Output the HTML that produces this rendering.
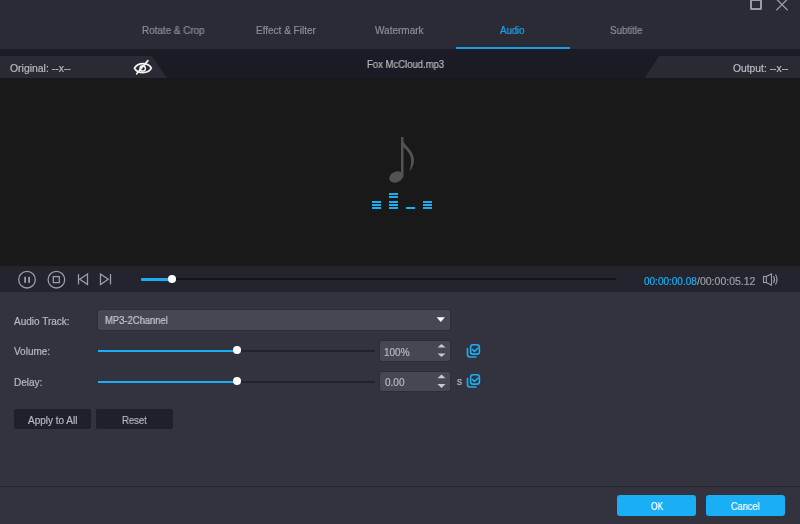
<!DOCTYPE html>
<html><head><meta charset="utf-8">
<style>
*{margin:0;padding:0;box-sizing:border-box}
html,body{width:800px;height:524px;overflow:hidden;background:#33333f;font-family:"Liberation Sans",sans-serif;font-size:10px}
.a{position:absolute}
.t{position:absolute;white-space:nowrap;line-height:1;transform-origin:0 0;-webkit-text-stroke:0.2px currentColor;will-change:transform}
#hdr{left:0;top:0;width:800px;height:49px;background:#2b2b35}
#info{left:0;top:49px;width:800px;height:29px;background:#1b1b25}
#prev{left:0;top:78px;width:800px;height:188px;background:#191919}
#ctrl{left:0;top:266px;width:800px;height:26px;background:#24242e}
#sett{left:0;top:292px;width:800px;height:232px;background:#33333f}
.tab{color:#8d8d96;font-size:10px}
.lbl{color:#b8b8c0}
.box{background:#474753;border-radius:2px;box-shadow:0 0 0 1px rgba(0,0,0,.1)}
.btn{background:#20202a;border-radius:2px}
.bb{background:#1aaff5;border-radius:3px}
</style></head><body>
<div class="a" id="hdr"></div>
<div class="a" id="info"></div>
<div class="a" id="prev"></div>
<div class="a" id="ctrl"></div>
<div class="a" id="sett"></div>

<!-- window buttons -->
<div class="a" style="left:750.4px;top:-1.2px;width:11.2px;height:10.7px;border:2px solid #9c9ca4;border-radius:1.5px"></div>
<svg class="a" style="left:774px;top:0" width="16" height="12"><path d="M2.7 -0.7 L13.3 9.9 M13.3 -0.7 L2.7 9.9" stroke="#a0a0a8" stroke-width="1.3" stroke-linecap="round"/></svg>

<!-- tabs -->
<div class="t tab" style="left:142px;top:26px;transform:scaleX(.988)">Rotate &amp; Crop</div>
<div class="t tab" style="left:256px;top:26px">Effect &amp; Filter</div>
<div class="t tab" style="left:374.8px;top:26px">Watermark</div>
<div class="t tab" style="left:500.2px;top:26px;color:#1aa8ee;transform:scaleX(.96)">Audio</div>
<div class="t tab" style="left:609.8px;top:26px;transform:scaleX(.976)">Subtitle</div>
<div class="a" style="left:456px;top:47px;width:114px;height:2px;background:#13a2e6"></div>

<!-- info bar -->
<svg class="a" style="left:0;top:56px" width="800" height="22">
<path d="M0 0 H152 L167 22 H0 Z" fill="#2a2a35"/>
<path d="M659 0 H800 V22 H644.7 Z" fill="#2a2a35"/>
</svg>
<div class="t lbl" style="left:9.5px;top:64px;transform:scaleX(1.043)">Original: --x--</div>
<div class="t lbl" style="left:733.2px;top:64px;transform:scaleX(1.03)">Output: --x--</div>
<div class="t lbl" style="left:367.2px;top:60px;transform:scaleX(.951)">Fox McCloud.mp3</div>
<svg class="a" style="left:130px;top:57px" width="26" height="20">
<path d="M4.4 11.2 C8 5 18 5 21.4 11.2 C18 17.2 8 17.2 4.4 11.2 Z" fill="none" stroke="#f2f2f2" stroke-width="1.7" stroke-linejoin="round"/>
<circle cx="12.7" cy="11.4" r="2.7" fill="none" stroke="#f2f2f2" stroke-width="1.5"/>
<path d="M17.9 3.6 L6.7 16.8" stroke="#f2f2f2" stroke-width="1.7" stroke-linecap="round"/>
</svg>

<!-- music note -->
<svg class="a" style="left:380px;top:130px" width="40" height="60">
<path d="M21 7 L23.5 7 L23.5 47 L21 47 Z" fill="#535353"/>
<path d="M21 7 C23 15 34 20 34 30 C34 35 32 38 29.6 41.5 C30.5 37 31.5 33 31 29 C30 22 25 19 23.5 17 Z" fill="#535353"/>
<ellipse cx="16.2" cy="47" rx="7.3" ry="5.3" transform="rotate(-25 16.2 47)" fill="#535353"/>
</svg>

<!-- equalizer -->
<svg class="a" style="left:370px;top:190px" width="66" height="22">
<g fill="#1aaff5">
<rect x="2" y="11" width="9" height="2"/><rect x="2" y="14" width="9" height="2"/><rect x="2" y="17" width="9" height="2"/>
<rect x="19" y="3" width="9" height="2"/><rect x="19" y="6" width="9" height="2"/>
<rect x="19" y="11" width="9" height="2"/><rect x="19" y="14" width="9" height="2"/><rect x="19" y="17" width="9" height="2"/>
<rect x="36" y="17" width="9" height="2"/>
<rect x="53" y="11" width="9" height="2"/><rect x="53" y="14" width="9" height="2"/><rect x="53" y="17" width="9" height="2"/>
</g>
</svg>

<!-- control bar -->
<svg class="a" style="left:0;top:266px" width="130" height="26">
<g fill="none" stroke="#9c9ca4" stroke-width="1.3">
<circle cx="27" cy="13.7" r="8.3"/>
<circle cx="56.4" cy="13.7" r="8.3"/>
<rect x="53.3" y="10.6" width="6" height="6"/>
<path d="M78.5 8 V18.5 M87.5 8 L79.8 13.3 L87.5 18.5 Z"/>
<path d="M100.5 8 L108.2 13.3 L100.5 18.5 Z M110.5 8 V18.5"/>
</g>
<g fill="#9c9ca4"><rect x="24.2" y="10.8" width="1.8" height="6"/><rect x="28.2" y="10.8" width="1.8" height="6"/></g>
</svg>
<div class="a" style="left:141px;top:278px;width:475px;height:2px;background:#161618"></div>
<div class="a" style="left:141px;top:277.5px;width:31px;height:3px;background:#1aaff5;border-radius:1px"></div>
<div class="a" style="left:168px;top:275px;width:8px;height:8px;border-radius:50%;background:#fff"></div>
<div class="t" style="left:643.8px;top:277px;color:#1aaff5">00:00:00.08</div><div class="t" style="left:697px;top:277px;color:#9c9ca4;transform:scaleX(1.051)">/00:00:05.12</div>
<svg class="a" style="left:758px;top:270px" width="24" height="20">
<g fill="none" stroke="#9c9ca4" stroke-width="1.1">
<rect x="5.5" y="6.5" width="2.8" height="6"/>
<path d="M8.3 6.6 L13.5 4 V15.2 L8.3 12.4"/>
<path d="M15.5 6 Q17.5 9.5 15.5 13 M17.5 4.5 Q20.5 9.5 17.5 14.5"/>
</g>
</svg>

<!-- settings -->
<div class="t lbl" style="left:14.1px;top:317px">Audio Track:</div>
<div class="a box" style="left:98px;top:310px;width:352px;height:20px"></div>
<div class="t lbl" style="left:105px;top:316px;color:#c8c8d0;transform:scaleX(.942)">MP3-2Channel</div>
<svg class="a" style="left:436px;top:316px" width="10" height="7"><path d="M0.6 1.2 H8.9 L4.75 6 Z" fill="#fff"/></svg>

<div class="t lbl" style="left:14.1px;top:347px">Volume:</div>
<div class="a" style="left:98px;top:350px;width:277px;height:2px;background:#222229"></div>
<div class="a" style="left:98px;top:350px;width:139px;height:2px;background:#1aaff5"></div>
<div class="a" style="left:232.6px;top:346.4px;width:8px;height:8px;border-radius:50%;background:#fff"></div>
<div class="a box" style="left:380px;top:341px;width:70px;height:20px"></div>
<div class="t lbl" style="left:383.7px;top:348px">100%</div>
<svg class="a" style="left:437px;top:343px" width="10" height="16"><g fill="#c8c8d0"><path d="M0.5 4.5 L4.5 1 L8.5 4.5 Z"/><path d="M0.5 10.5 H8.5 L4.5 14 Z"/></g></svg>
<svg class="a" style="left:462px;top:340px" width="24" height="22">
<g fill="none" stroke="#1aaff5" stroke-width="1.6" stroke-linecap="round" stroke-linejoin="round">
<rect x="8.6" y="4.8" width="8.8" height="9.3" rx="2.4"/>
<path d="M5.5 8.5 V14.5 Q5.5 17 8 17 H14"/>
<path d="M10.5 9.5 L12.5 11.5 L16 8"/>
</g>
</svg>

<div class="t lbl" style="left:14.1px;top:378px">Delay:</div>
<div class="a" style="left:98px;top:381px;width:277px;height:2px;background:#222229"></div>
<div class="a" style="left:98px;top:381px;width:139px;height:2px;background:#1aaff5"></div>
<div class="a" style="left:232.6px;top:377.3px;width:8px;height:8px;border-radius:50%;background:#fff"></div>
<div class="a box" style="left:380px;top:372px;width:70px;height:19px"></div>
<div class="t lbl" style="left:384.7px;top:378px">0.00</div>
<svg class="a" style="left:437px;top:374px" width="10" height="16"><g fill="#c8c8d0"><path d="M0.5 4.3 L4.5 0.6 L8.5 4.3 Z"/><path d="M0.5 10.1 H8.5 L4.5 14 Z"/></g></svg>
<div class="t lbl" style="left:457px;top:377px">s</div>
<svg class="a" style="left:462px;top:370px" width="24" height="22">
<g fill="none" stroke="#1aaff5" stroke-width="1.6" stroke-linecap="round" stroke-linejoin="round">
<rect x="8.6" y="4.8" width="8.8" height="9.3" rx="2.4"/>
<path d="M5.5 8.5 V14.5 Q5.5 17 8 17 H14"/>
<path d="M10.5 9.5 L12.5 11.5 L16 8"/>
</g>
</svg>

<div class="a btn" style="left:14px;top:409px;width:77px;height:20px"></div>
<div class="t lbl" style="left:28.1px;top:416px">Apply to All</div>
<div class="a btn" style="left:96px;top:409px;width:77px;height:20px"></div>
<div class="t lbl" style="left:122px;top:416px;transform:scaleX(.95)">Reset</div>

<div class="a" style="left:0;top:486px;width:800px;height:1px;background:#25252e"></div>
<div class="a bb" style="left:617px;top:495px;width:79px;height:21px"></div>
<div class="t" style="left:650.9px;top:502px;color:#fff;transform:scaleX(.85)">OK</div>
<div class="a bb" style="left:706px;top:495px;width:79px;height:21px"></div>
<div class="t" style="left:731px;top:502px;color:#fff;transform:scaleX(.919)">Cancel</div>
</body></html>
